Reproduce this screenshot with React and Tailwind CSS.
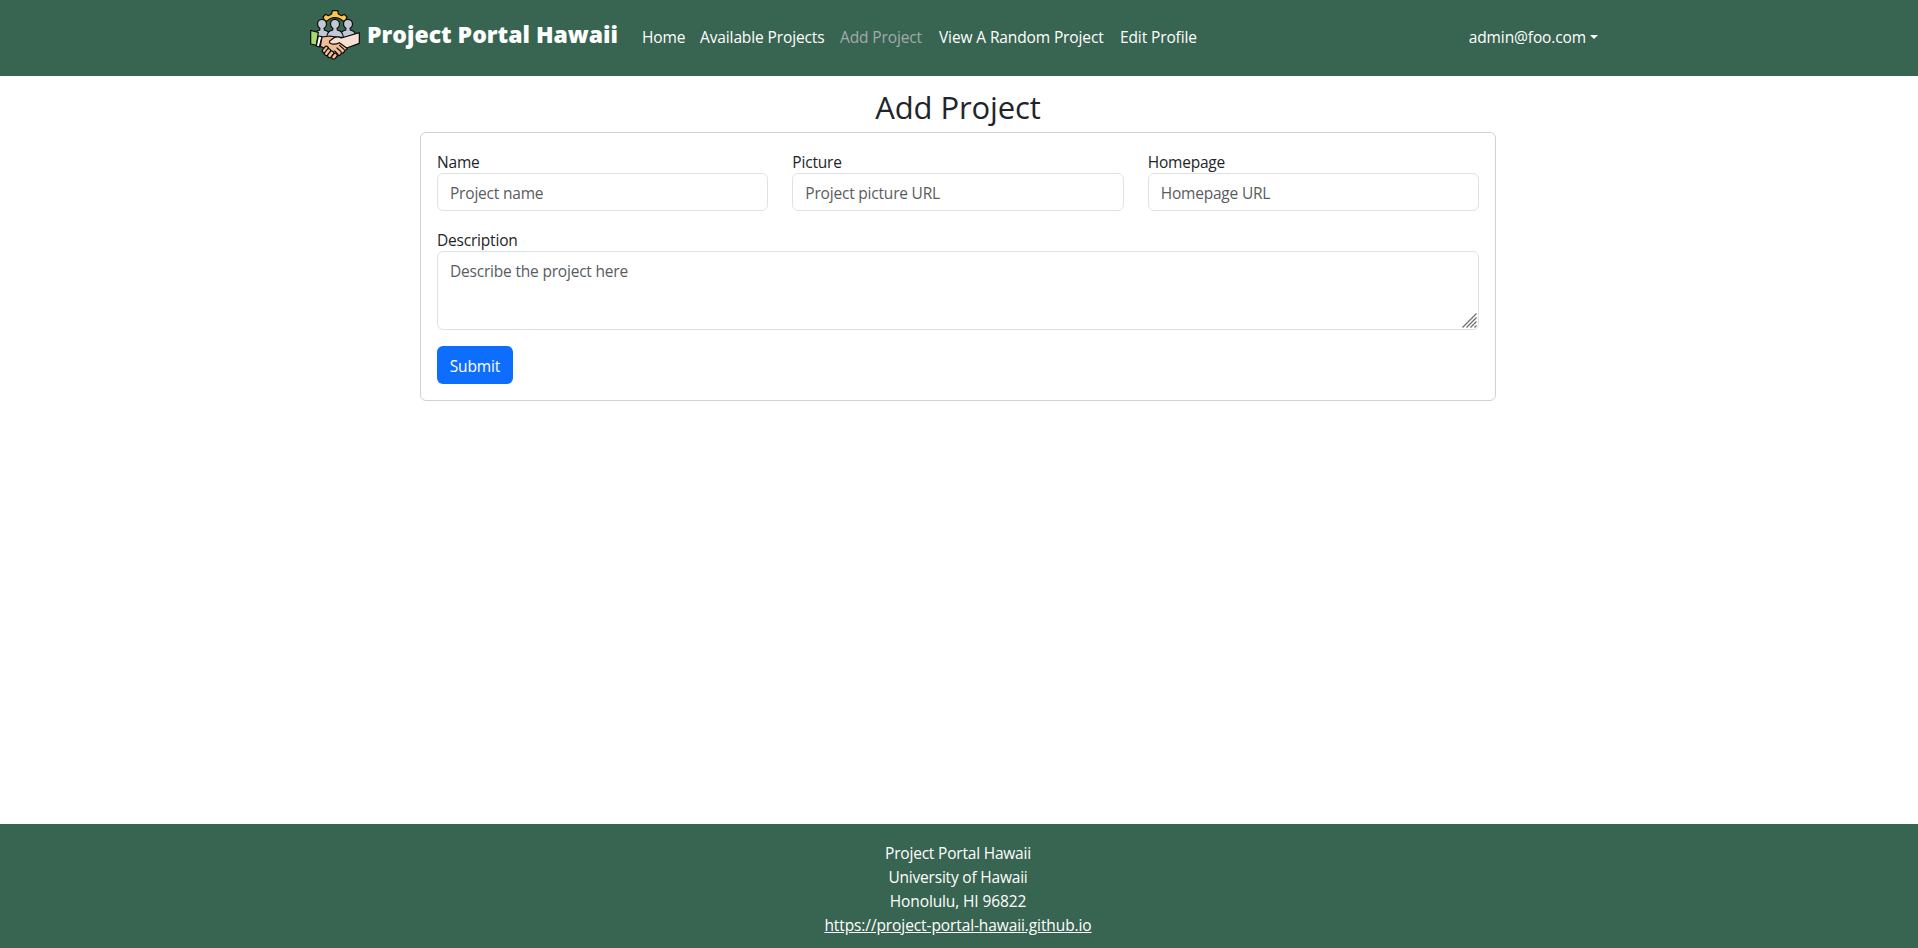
const navLinks = [
  { label: "Home", width: "w-[58px]" },
  { label: "Available Projects", width: "w-[140px]" },
  { label: "Add Project", width: "w-[99px]", active: true },
  { label: "View A Random Project", width: "w-[181px]" },
  { label: "Edit Profile", width: "w-[93px]" },
];

const fields = [
  { label: "Name", placeholder: "Project name" },
  { label: "Picture", placeholder: "Project picture URL" },
  { label: "Homepage", placeholder: "Homepage URL" },
];

function Person({ x }) {
  return (
    <g transform={`translate(${x} 0)`}>
      <path d="M-6 55V66Q-23 68 -25 88H25Q23 68 6 66V55Z" />
      <ellipse cx="0" cy="48" rx="13.5" ry="14" />
      <path stroke="none" d="M-4.5 56H4.5V70H-4.5Z" />
    </g>
  );
}

function Logo() {
  return (
    <svg
      viewBox="6 6 150 150"
      className="h-[50px] w-[50px] shrink-0"
      stroke="#0b0b0b"
      strokeWidth="3.6"
      strokeLinejoin="round"
      strokeLinecap="round"
    >
      <path
        fill="#fdc94d"
        d="M45 27L53 19L61 23L71 18L73 8H89L91 18L101 23L109 19L117 27L113 36L106 40Q95 29 81 29Q67 29 56 40L49 36Z"
      />
      <g fill="#c3c8d6">
        <Person x={42} />
        <Person x={120} />
        <Person x={81} />
      </g>
      <path fill="#a5dc69" d="M8 67L31 73L25 112L8 108Z" />
      <path fill="#ffffff" d="M31 84L42 86L34 117L25 114Z" />
      <path
        fill="#f0bd94"
        d="M42 87L66 84L87 88L110 104L118 116Q119 126 111 126L109 131Q105 138 100 134Q98 144 90 142Q87 150 79 147L60 129Q50 119 37 115Z"
      />
      <path
        fill="#f7e0cf"
        d="M154 74V106L116 120L94 104Q84 110 72 108Q62 106 65 99L80 88Q90 84 100 90Z"
      />
      <g fill="#f0bd94">
        <rect x="46" y="114" width="12" height="22" rx="6" transform="rotate(38 52 125)" />
        <rect x="53" y="121" width="12" height="23" rx="6" transform="rotate(38 59 132)" />
        <rect x="62" y="128" width="12" height="22" rx="6" transform="rotate(38 68 139)" />
        <rect x="73" y="135" width="12" height="19" rx="6" transform="rotate(38 79 145)" />
      </g>
      <path fill="none" d="M99 131L87 120M108 124L95 112M90 139L80 129" />
    </svg>
  );
}

function ResizeGrip() {
  return (
    <svg
      viewBox="0 0 15 15"
      className="pointer-events-none absolute right-[2px] bottom-[2px] h-[15px] w-[15px]"
      stroke="#6b6b6b"
      strokeWidth="1.2"
    >
      <path d="M0.5 14.5L14.5 0.5M4.5 14.5L14.5 4.5M8.5 14.5L14.5 8.5M12.5 14.5L14.5 12.5" />
    </svg>
  );
}

const control =
  "block w-full rounded-md border border-[#dee2e6] bg-white px-3 text-[15.5px] leading-6 tracking-[-0.2px] text-[#212529] outline-none placeholder:text-[#595c5f] placeholder:opacity-100";

export default function App() {
  return (
    <div className="flex h-[948px] flex-col bg-white font-['Open_Sans',sans-serif] text-[15.5px] leading-6 tracking-[-0.12px] text-[#212529]">
      <header className="h-[76px] bg-[#386551] text-white">
        <div className="mx-auto flex h-full w-[1320px] items-start pl-[11px]">
          <a className="flex items-start pt-[10px]" href="#">
            <Logo />
            <span className="ml-[7px] w-[275px] pt-[7px] text-[23px] leading-[34px] font-extrabold tracking-normal whitespace-nowrap">
              Project Portal Hawaii
            </span>
          </a>
          <nav className="flex pt-[25px] whitespace-nowrap">
            {navLinks.map((l) => (
              <a
                key={l.label}
                href="#"
                className={`${l.width} ${l.active ? "text-[#a2a9ad]" : ""}`}
              >
                {l.label}
              </a>
            ))}
          </nav>
          <button className="ml-auto flex items-center pt-[25px] pr-[21px]">
            admin@foo.com
            <span className="ml-1 border-x-[4.5px] border-t-[4.5px] border-x-transparent border-t-white" />
          </button>
        </div>
      </header>

      <main className="ml-[420px] w-[1076px] flex-1">
        <h2 className="h-14 pt-[12px] text-center text-[31px] leading-[38px] tracking-[-0.1px]">
          Add Project
        </h2>
        <form className="flex h-[269px] flex-col gap-4 rounded-md border border-[#d0d1d2] p-4">
          <div className="grid grid-cols-3 gap-6">
            {fields.map((f) => (
              <label key={f.label} className="block">
                <span className="block h-6 leading-[26px] tracking-[-0.2px]">{f.label}</span>
                <input className={`${control} h-[38px] pt-[2px]`} placeholder={f.placeholder} />
              </label>
            ))}
          </div>
          <label className="relative block">
            <span className="block h-6 leading-[26px] tracking-[-0.2px]">Description</span>
            <textarea
              className={`${control} h-[79px] resize-none pt-[7px]`}
              placeholder="Describe the project here"
            />
            <ResizeGrip />
          </label>
          <button
            type="button"
            className="h-[38px] w-[76px] rounded-md bg-[#0d6efd] pt-[2px] text-white"
          >
            Submit
          </button>
        </form>
      </main>

      <footer className="h-[124px] bg-[#386551] pt-[17px] pr-[2px] text-center text-white">
        <p className="tracking-[-0.2px]">Project Portal Hawaii</p>
        <p className="tracking-[-0.2px]">University of Hawaii</p>
        <p>Honolulu, HI 96822</p>
        <a href="#" className="tracking-[-0.1px] underline">
          https://project-portal-hawaii.github.io
        </a>
      </footer>
    </div>
  );
}
